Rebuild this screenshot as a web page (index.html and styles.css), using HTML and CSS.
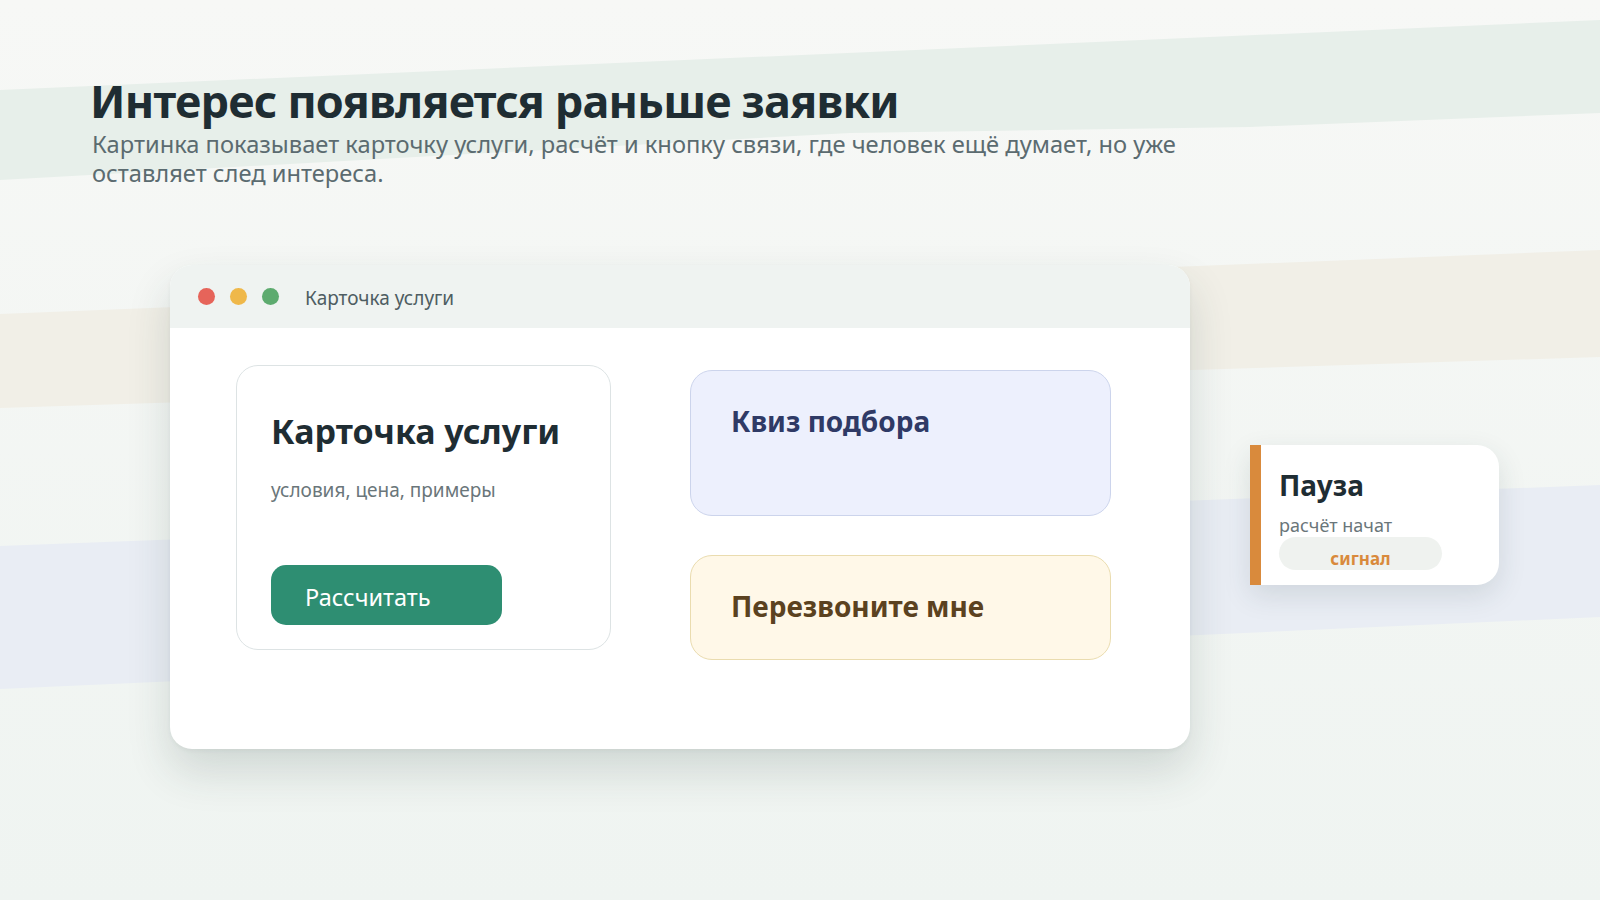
FILE: index.html
```html
<!DOCTYPE html>
<html lang="ru">
<head>
    <meta charset="UTF-8">
    <meta name="viewport" content="width=device-width, initial-scale=1.0">
    <title>Интерес появляется раньше заявки</title>
    <link rel="stylesheet" href="styles.css">
</head>
<body>
    <svg class="backdrop" width="1600" height="900" viewBox="0 0 1600 900" preserveAspectRatio="none">
        <polygon points="0,90 1600,20 1600,113 1250,127 850,133 0,180" fill="#e7efea"/>
        <polygon points="0,314 1600,250 1600,357 0,408" fill="#f1efe7"/>
        <polygon points="0,546 1600,485 1600,617 0,689" fill="#e9edf4"/>
    </svg>

    <div class="page">
        <div class="header">
            <h1>Интерес появляется раньше заявки</h1>
            <p>Картинка показывает карточку услуги, расчёт и кнопку связи, где человек ещё думает, но уже оставляет след интереса.</p>
        </div>

        <div class="stage">
            <div class="window">
                <div class="window-bar">
                    <span class="dot red"></span>
                    <span class="dot yellow"></span>
                    <span class="dot green"></span>
                    <span class="window-title">Карточка услуги</span>
                </div>
                <div class="window-body">
                    <div class="service-card">
                        <h2>Карточка услуги</h2>
                        <p>условия, цена, примеры</p>
                        <button class="calc-btn">Рассчитать</button>
                    </div>
                    <div class="side">
                        <div class="tile quiz">Квиз подбора</div>
                        <div class="tile callback">Перезвоните мне</div>
                    </div>
                </div>
            </div>

            <div class="pause">
                <h3>Пауза</h3>
                <p>расчёт начат</p>
                <span class="signal">сигнал</span>
            </div>
        </div>
    </div>
</body>
</html>
```

FILE: styles.css
```css
body {
    font-family: "Noto Sans", "Open Sans", sans-serif;
    background: linear-gradient(180deg, #f7f8f6 0%, #eff4f1 100%);
    color: #1f2d33;
    margin: 0;
    padding: 0;
    width: 1600px;
    height: 900px;
    overflow: hidden;
    position: relative;
}
.backdrop {
    position: absolute;
    left: 0;
    top: 0;
    z-index: 0;
}
.page {
    position: relative;
    z-index: 1;
    padding: 76px 0 0 90px;
}
.header h1 {
    margin: 0;
    font-size: 45px;
    line-height: 1.1;
    font-weight: 700;
    letter-spacing: -0.8px;
    color: #1f2d33;
}
.header p {
    margin: 4px 0 0 2px;
    max-width: 1200px;
    font-size: 23.7px;
    line-height: 29px;
    color: #5b6b70;
}
.stage {
    display: flex;
    align-items: flex-start;
    margin-top: 77px;
    margin-left: 80px;
}
.window {
    width: 1020px;
    height: 484px;
    background-color: #ffffff;
    border-radius: 22px;
    box-shadow: 0 22px 44px rgba(40, 60, 55, 0.16), 0 2px 4px rgba(40, 60, 55, 0.05);
    overflow: hidden;
}
.window-bar {
    display: flex;
    align-items: center;
    height: 63px;
    padding-left: 28px;
    background-color: #eff3f1;
}
.dot {
    width: 17px;
    height: 17px;
    border-radius: 50%;
    margin-right: 15px;
}
.dot.red {
    background-color: #e6645a;
}
.dot.yellow {
    background-color: #efb84a;
}
.dot.green {
    background-color: #5dab6f;
}
.window-title {
    margin-left: 11px;
    padding-top: 4px;
    font-size: 19px;
    color: #4e5d62;
}
.window-body {
    display: flex;
    align-items: flex-start;
    padding: 37px 79px 0 66px;
    gap: 79px;
}
.service-card {
    width: 375px;
    height: 285px;
    box-sizing: border-box;
    border: 1px solid #dde3e4;
    border-radius: 22px;
    padding: 45px 34px 0 34px;
}
.service-card h2 {
    margin: 0;
    font-size: 34px;
    line-height: 1.2;
    font-weight: 700;
    color: #1f2d33;
}
.service-card p {
    margin: 26px 0 0 0;
    font-size: 19px;
    line-height: 1.4;
    color: #6a767a;
}
.calc-btn {
    display: block;
    margin-top: 61px;
    width: 231px;
    height: 60px;
    padding: 5px 0 0 34px;
    text-align: left;
    border: none;
    border-radius: 15px;
    background-color: #2e8e72;
    color: #ffffff;
    font-family: inherit;
    font-size: 23.5px;
}
.side {
    flex: 1;
    display: flex;
    flex-direction: column;
    gap: 39px;
    padding-top: 5px;
}
.tile {
    border-radius: 22px;
    padding: 34px 40px 36px 40px;
    font-size: 28px;
    line-height: 1.2;
    font-weight: 700;
}
.tile.quiz {
    min-height: 146px;
    box-sizing: border-box;
    background-color: #edf0fd;
    border: 1px solid #ccd4ec;
    color: #2f3a66;
}
.tile.callback {
    background-color: #fff8e8;
    border: 1px solid #eadcaf;
    color: #5b4220;
}
.pause {
    margin-left: 60px;
    margin-top: 180px;
    width: 249px;
    height: 140px;
    box-sizing: border-box;
    background-color: #ffffff;
    border-left: 11px solid #d98a3c;
    border-radius: 0 22px 22px 0;
    padding: 24px 0 0 18px;
    box-shadow: 0 10px 28px rgba(40, 60, 70, 0.13);
}
.pause h3 {
    margin: 0;
    font-size: 28px;
    line-height: 1.2;
    font-weight: 700;
    color: #1f2d33;
}
.pause p {
    margin: 12px 0 0 0;
    font-size: 18px;
    line-height: 1.3;
    color: #6a767a;
}
.signal {
    display: block;
    width: 163px;
    height: 33px;
    box-sizing: border-box;
    margin-top: 0;
    padding-top: 13px;
    border-radius: 17px;
    background-color: #eff2ef;
    text-align: center;
    font-size: 17px;
    line-height: 18px;
    font-weight: 700;
    color: #d98a3c;
}
```
